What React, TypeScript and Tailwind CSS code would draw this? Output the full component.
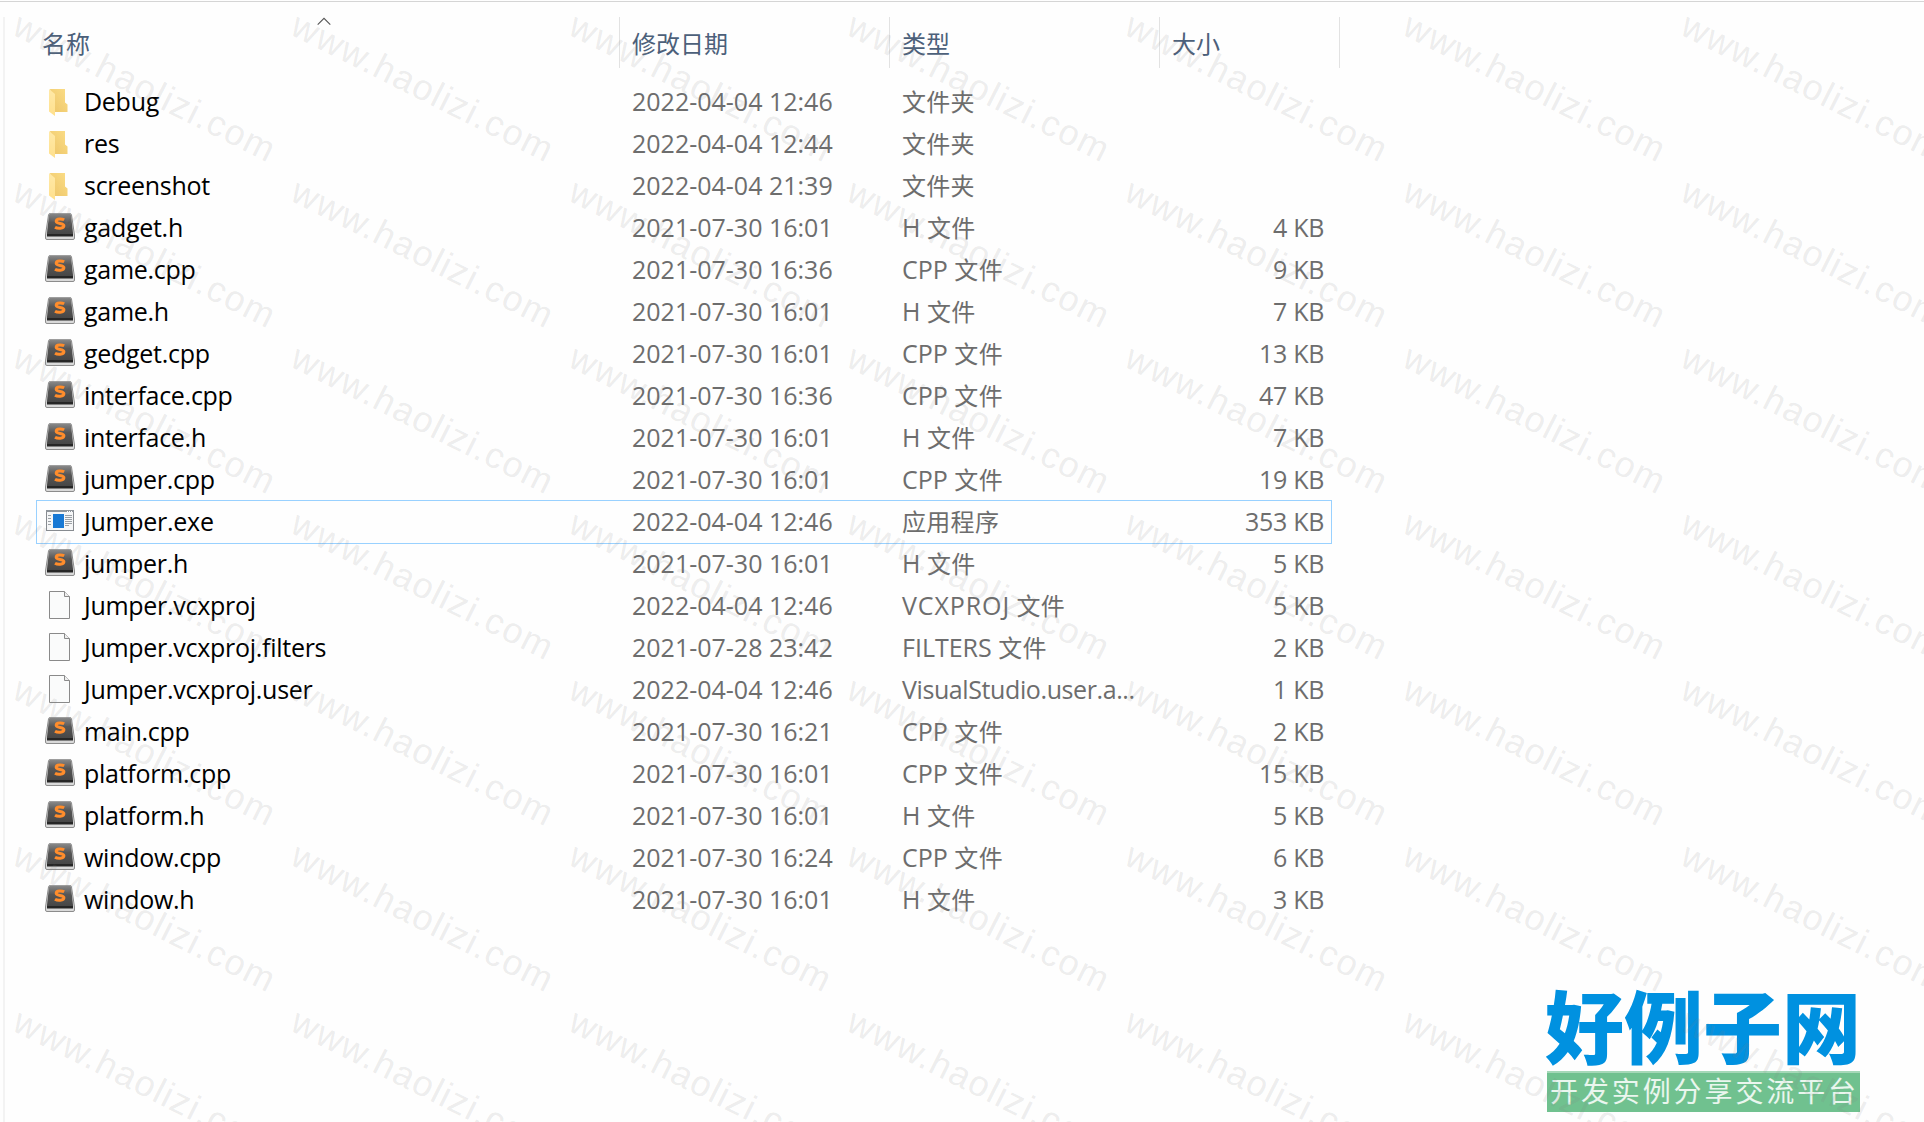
import clsx from "clsx";

type Kind = "folder" | "code" | "exe" | "file";

type Entry = {
  name: string;
  date: string;
  kind: Kind;
  ext?: string;
  extClass?: string;
  label?: string;
  size?: string;
  selected?: boolean;
};

const ENTRIES: Entry[] = [
  { name: "Debug", date: "2022-04-04 12:46", kind: "folder", label: "文件夹" },
  { name: "res", date: "2022-04-04 12:44", kind: "folder", label: "文件夹" },
  { name: "screenshot", date: "2022-04-04 21:39", kind: "folder", label: "文件夹" },
  { name: "gadget.h", date: "2021-07-30 16:01", kind: "code", ext: "H", label: "文件", size: "4 KB" },
  { name: "game.cpp", date: "2021-07-30 16:36", kind: "code", ext: "CPP", label: "文件", size: "9 KB" },
  { name: "game.h", date: "2021-07-30 16:01", kind: "code", ext: "H", label: "文件", size: "7 KB" },
  { name: "gedget.cpp", date: "2021-07-30 16:01", kind: "code", ext: "CPP", label: "文件", size: "13 KB" },
  { name: "interface.cpp", date: "2021-07-30 16:36", kind: "code", ext: "CPP", label: "文件", size: "47 KB" },
  { name: "interface.h", date: "2021-07-30 16:01", kind: "code", ext: "H", label: "文件", size: "7 KB" },
  { name: "jumper.cpp", date: "2021-07-30 16:01", kind: "code", ext: "CPP", label: "文件", size: "19 KB" },
  { name: "Jumper.exe", date: "2022-04-04 12:46", kind: "exe", label: "应用程序", size: "353 KB", selected: true },
  { name: "jumper.h", date: "2021-07-30 16:01", kind: "code", ext: "H", label: "文件", size: "5 KB" },
  { name: "Jumper.vcxproj", date: "2022-04-04 12:46", kind: "file", ext: "VCXPROJ", extClass: "tracking-[0.9px]", label: "文件", size: "5 KB" },
  { name: "Jumper.vcxproj.filters", date: "2021-07-28 23:42", kind: "file", ext: "FILTERS", label: "文件", size: "2 KB" },
  { name: "Jumper.vcxproj.user", date: "2022-04-04 12:46", kind: "file", ext: "VisualStudio.user.a...", extClass: "tracking-[-0.4px]", size: "1 KB" },
  { name: "main.cpp", date: "2021-07-30 16:21", kind: "code", ext: "CPP", label: "文件", size: "2 KB" },
  { name: "platform.cpp", date: "2021-07-30 16:01", kind: "code", ext: "CPP", label: "文件", size: "15 KB" },
  { name: "platform.h", date: "2021-07-30 16:01", kind: "code", ext: "H", label: "文件", size: "5 KB" },
  { name: "window.cpp", date: "2021-07-30 16:24", kind: "code", ext: "CPP", label: "文件", size: "6 KB" },
  { name: "window.h", date: "2021-07-30 16:01", kind: "code", ext: "H", label: "文件", size: "3 KB" },
];

function FolderIcon() {
  return (
    <svg width="30" height="30" viewBox="0 0 30 30">
      <path d="M5 2H20V15.5L22.5 17.5V25H9Z" fill="url(#folderBack)" />
      <path d="M4 2L10 7V29L4 24.5Z" fill="url(#folderFront)" />
    </svg>
  );
}

function CodeIcon() {
  return (
    <svg width="30" height="30" viewBox="0 0 30 30">
      <path d="M3.5 2Q4 0 6 0H24Q26 0 26.5 2L29.5 22V25Q29.5 26.5 28 26.5H2Q.5 26.5 .5 25V22Z" fill="#d9d9d9" stroke="#8c8c8c" />
      <path d="M4 2Q4.3 .5 6 .5H24Q25.7 .5 26 2L28 20V23H2V20Z" fill="url(#keycap)" />
      <path d="M2 21H28V23.5H2Z" fill="#262626" />
      <path
        d="M19.2 6.8C17.2 5.7 11.2 5.2 11.2 8.2C11.2 11.2 18.9 9.6 18.9 12.8C18.9 15.8 12.3 15.6 10 14.2"
        fill="none"
        stroke="#ff8d2c"
        strokeWidth="3"
      />
    </svg>
  );
}

function ExeIcon() {
  return (
    <svg width="30" height="30" viewBox="0 0 30 30" shapeRendering="crispEdges">
      <path d="M1.5 3.5H28.5V23.5H1.5Z" fill="#f5f6f7" stroke="#878b90" />
      <path d="M1 3H29V5H1Z" fill="#8f959b" />
      <path d="M22 4H23V5H22ZM24 4H25V5H24ZM26 4H27V5H26Z" fill="#fff" />
      <path d="M8 7H19V21H8Z" fill="#1778d4" />
      <path
        d="M3 8.5H6M3 11.5H6M3 14.5H6M3 17.5H6M20 8.5H27M20 10.5H27M20 12.5H27M20 14.5H27M20 16.5H27M20 18.5H24"
        stroke="#9ba0a5"
      />
    </svg>
  );
}

function FileIcon() {
  return (
    <svg width="30" height="30" viewBox="0 0 30 30">
      <path d="M4.5 .5H19.5L24.5 5.5V27.5H4.5Z" fill="#fafbfb" stroke="#8a8a8a" />
      <path d="M19.5 .5V5.5H24.5" fill="#eee" stroke="#8a8a8a" />
    </svg>
  );
}

function EntryIcon({ kind }: { kind: Kind }) {
  if (kind === "folder") return <FolderIcon />;
  if (kind === "code") return <CodeIcon />;
  if (kind === "exe") return <ExeIcon />;
  return <FileIcon />;
}

// Gradients shared by every row icon
function IconDefs() {
  return (
    <svg width="0" height="0" className="absolute">
      <defs>
        <linearGradient id="folderBack" x1="0" y1="1" x2="1" y2="0">
          <stop offset="0" stopColor="#edc569" />
          <stop offset="1" stopColor="#fbdd86" />
        </linearGradient>
        <linearGradient id="folderFront" x1="0" y1="0" x2="0" y2="1">
          <stop offset="0" stopColor="#ffe9a8" />
          <stop offset="1" stopColor="#ffe08c" />
        </linearGradient>
        <linearGradient id="keycap" x1="0" y1="0" x2="0" y2="1">
          <stop offset="0" stopColor="#8a8a8a" />
          <stop offset="0.4" stopColor="#565656" />
          <stop offset="1" stopColor="#444" />
        </linearGradient>
      </defs>
    </svg>
  );
}

function HeaderCell({ title, className }: { title: string; className: string }) {
  return (
    <div className={clsx("h-[51px] border-r border-[#e2e2e2] pt-[9px] text-2xl leading-[35px] text-[#4c607a]", className)}>
      {title}
    </div>
  );
}

function Header() {
  return (
    <div className="relative flex">
      <HeaderCell title="名称" className="w-[615px] pl-[37px]" />
      <HeaderCell title="修改日期" className="w-[270px] pl-3" />
      <HeaderCell title="类型" className="w-[270px] pl-3" />
      <HeaderCell title="大小" className="w-[180px] pl-3" />
      <svg className="absolute left-[312px] top-0" width="14" height="9" viewBox="0 0 14 9">
        <path d="M.7 7.7L7 1.4L13.3 7.7" fill="none" stroke="#555" strokeWidth="1.1" />
      </svg>
    </div>
  );
}

function Row({ entry }: { entry: Entry }) {
  return (
    <div
      className={clsx(
        "flex h-[42px] w-[1294px] whitespace-pre pl-2 pr-[7px] text-[25px] leading-[41px] text-[#6d6d6d]",
        entry.selected && "ring-1 ring-[#99d1ff]",
      )}
    >
      <div className="flex w-[587px]">
        <div className="w-[39px] pt-1.5">
          <EntryIcon kind={entry.kind} />
        </div>
        <span className="tracking-[-0.28px] text-black">{entry.name}</span>
      </div>
      <div className="w-[270px]">{entry.date}</div>
      <div className="w-[270px]">
        <span className={entry.extClass}>{entry.ext}</span>
        {entry.ext && entry.label && " "}
        <span className="text-2xl leading-none tracking-[0.3px]">{entry.label}</span>
      </div>
      <div className="flex-1 text-right tracking-[-0.3px]">{entry.size}</div>
    </div>
  );
}

function Watermark() {
  const cells = [];
  for (let y = 0; y < 7; y++) {
    for (let x = 0; x < 7; x++) {
      cells.push(
        <span
          key={`${x}-${y}`}
          className="absolute origin-top-left rotate-[26.6deg] whitespace-nowrap font-['Liberation_Sans'] text-[36px] leading-none tracking-[1.5px] text-[#808080]/15"
          style={{ left: 24 + x * 278, top: 7 + y * 166 }}
        >
          www.haolizi.com
        </span>,
      );
    }
  }
  return <div className="pointer-events-none absolute inset-0 overflow-hidden">{cells}</div>;
}

function Logo() {
  return (
    <div className="absolute left-[1547px] top-[985px] w-[313px] whitespace-nowrap">
      <div className="-ml-0.5 h-[86px] text-[79px] font-black leading-[85px] text-[#0091e0]">好例子网</div>
      <div className="h-[41px] border-t-2 border-[#a5d8b8] bg-[#70c18f] pl-[3px] text-[28px] leading-[37px] tracking-[2.9px] text-white/85">
        开发实例分享交流平台
      </div>
    </div>
  );
}

export default function App() {
  return (
    <div className="relative h-[1122px] w-[1924px] overflow-hidden bg-[#fefefe] pt-px font-['Open_Sans','Noto_Sans_CJK_SC',sans-serif]">
      <IconDefs />
      <div className="h-px bg-[#d5d5d5]" />
      <div className="ml-[3px] mt-[15px] h-[1105px] border-l-2 border-[#f3f3f3]">
        <Header />
        <div className="ml-8 mt-[13px]">
          {ENTRIES.map((entry) => (
            <Row key={entry.name} entry={entry} />
          ))}
        </div>
      </div>
      <Logo />
      <Watermark />
    </div>
  );
}
